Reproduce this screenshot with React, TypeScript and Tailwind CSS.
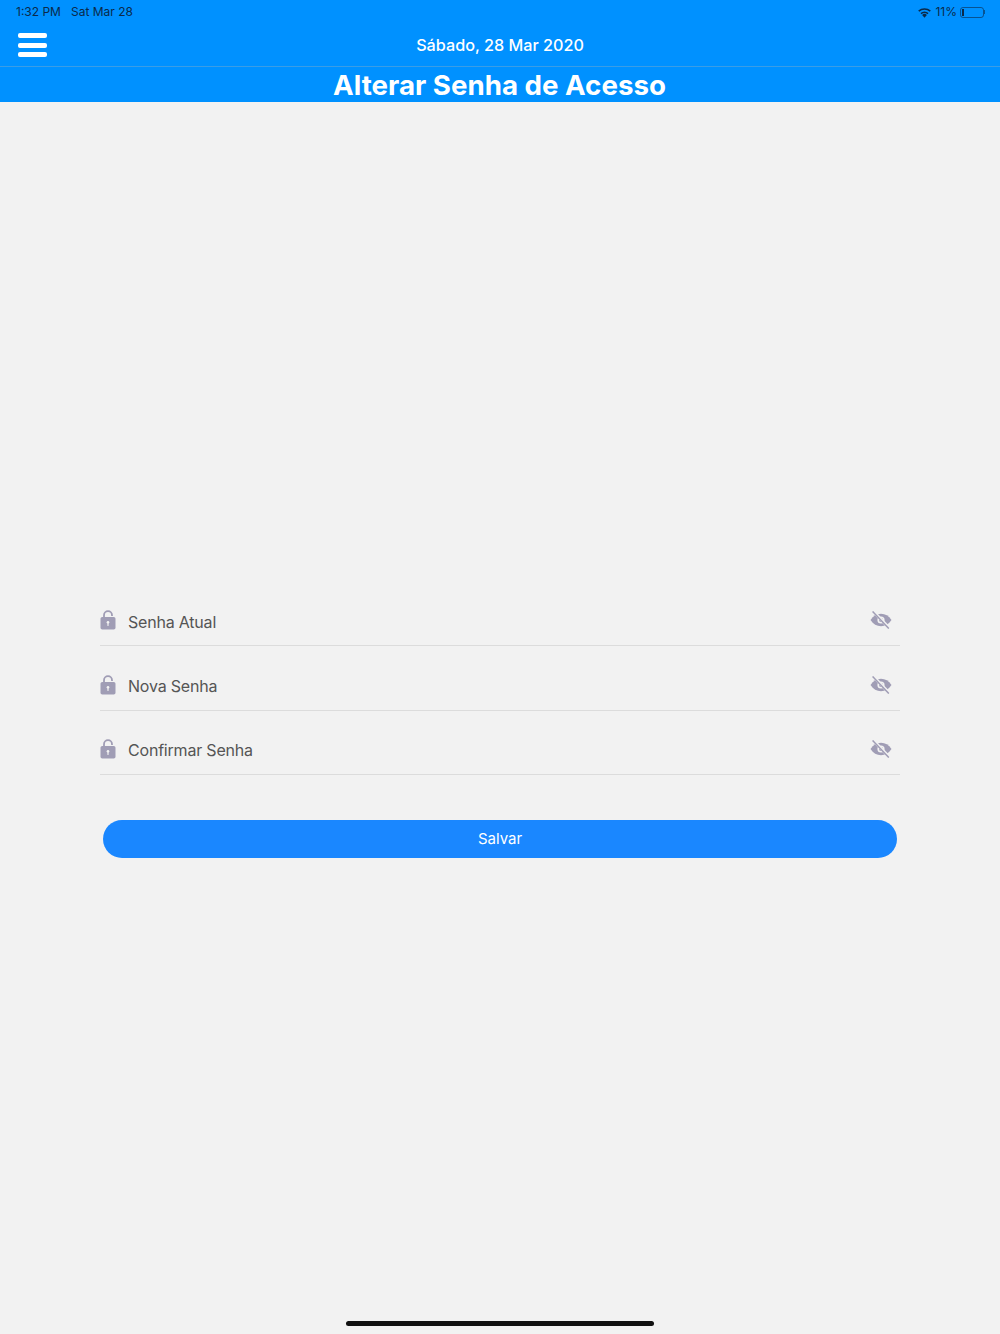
const fields = ["Senha Atual", "Nova Senha", "Confirmar Senha"];

const LockIcon = () => (
  <svg width="16" height="20" viewBox="0 0 16 20" className="shrink-0 mb-[3px]">
    <path d="M4 8V5.2a4 4 0 0 1 8 0V6" fill="none" stroke="#a09db5" strokeWidth="1.8" />
    <rect x="0.5" y="7" width="15" height="12.5" rx="1.8" fill="#a09db5" />
    <circle cx="8" cy="12.3" r="1.3" fill="#f2f2f2" />
    <rect x="7.4" y="12.5" width="1.2" height="3.4" fill="#f2f2f2" />
  </svg>
);

const EyeOffIcon = () => (
  <svg width="22" height="18" viewBox="0 0 22 18" className="shrink-0 mb-[3px]">
    <path d="M0.5 9C3.2 4.9 6.8 2.8 11 2.8S18.8 4.9 21.5 9C18.8 13.1 15.2 15.2 11 15.2S3.2 13.1 0.5 9Z" fill="#a09db5" />
    <circle cx="11" cy="9" r="3.6" fill="#f2f2f2" />
    <circle cx="11" cy="9" r="2" fill="#a09db5" />
    <path d="M3.2 0.2L19.2 17" stroke="#f2f2f2" strokeWidth="3" />
    <path d="M2.6 0.4L18.8 17.6" stroke="#a09db5" strokeWidth="1.4" />
  </svg>
);

const WifiIcon = () => (
  <svg width="15" height="11" viewBox="0 0 14 10">
    <path d="M7 9.8L4.8 7.3a3.2 3.2 0 0 1 4.4 0Z" fill="#0b2a4a" />
    <path d="M3.7 6.1a5 5 0 0 1 6.6 0" fill="none" stroke="#0b2a4a" strokeWidth="1.5" />
    <path d="M1.6 3.8a8 8 0 0 1 10.8 0" fill="none" stroke="#0b2a4a" strokeWidth="1.5" />
  </svg>
);

const App = () => {
  return (
    <div className="relative flex flex-col min-h-[1334px] bg-[#f2f2f2] font-['Inter',sans-serif]">
      {/* Status bar */}
      <div className="flex items-center justify-between h-6 pl-4 pr-[15px] bg-[#0091ff] text-[12px] text-[#0b2a4a]">
        <div className="flex gap-[10px]">
          <span>1:32 PM</span>
          <span>Sat Mar 28</span>
        </div>
        <div className="flex items-center gap-[3px]">
          <WifiIcon />
          <span>11%</span>
          <div className="flex items-center">
            <div className="w-[24px] h-[11px] rounded-[3px] border border-[#0b2a4a]/60 p-[1px]">
              <div className="w-[2px] h-full bg-[#0b2a4a]" />
            </div>
            <div className="w-[1px] h-[4px] bg-[#0b2a4a]/60" />
          </div>
        </div>
      </div>

      {/* Header */}
      <div className="relative flex items-center justify-center h-[43px] pt-[1px] bg-[#0091ff] border-b border-[#3a9de6]">
        <div className="absolute left-[18px] top-[9px] flex flex-col gap-[4.5px]">
          <div className="w-[29px] h-[5px] rounded-[2px] bg-white" />
          <div className="w-[29px] h-[5px] rounded-[2px] bg-white" />
          <div className="w-[29px] h-[5px] rounded-[2px] bg-white" />
        </div>
        <span className="text-[16.2px] font-medium text-white">Sábado, 28 Mar 2020</span>
      </div>
      <div className="flex items-center justify-center h-[35px] pt-[2px] pr-[1px] bg-[#0091ff] text-[27.7px] font-bold text-white">
        Alterar Senha de Acesso
      </div>

      {/* Form */}
      <div className="flex flex-col px-[100px] pt-[480px]">
        {fields.map((field) => (
          <div
            key={field}
            className="flex items-center h-[64.4px] pr-[8px] pt-[16px] border-b border-[#dcdcdc]"
          >
            <LockIcon />
            <span className="ml-3 flex-1 text-[16px] tracking-[-0.2px] text-[#555555]">{field}</span>
            <EyeOffIcon />
          </div>
        ))}
        <button className="mt-[45px] mx-[3px] h-[38px] rounded-[19px] bg-[#1a87ff] text-[15px] text-white">
          Salvar
        </button>
      </div>

      {/* Home indicator */}
      <div className="absolute bottom-[8px] left-[346px] w-[308px] h-[5px] rounded-full bg-[#111111]" />
    </div>
  );
};

export default App;
